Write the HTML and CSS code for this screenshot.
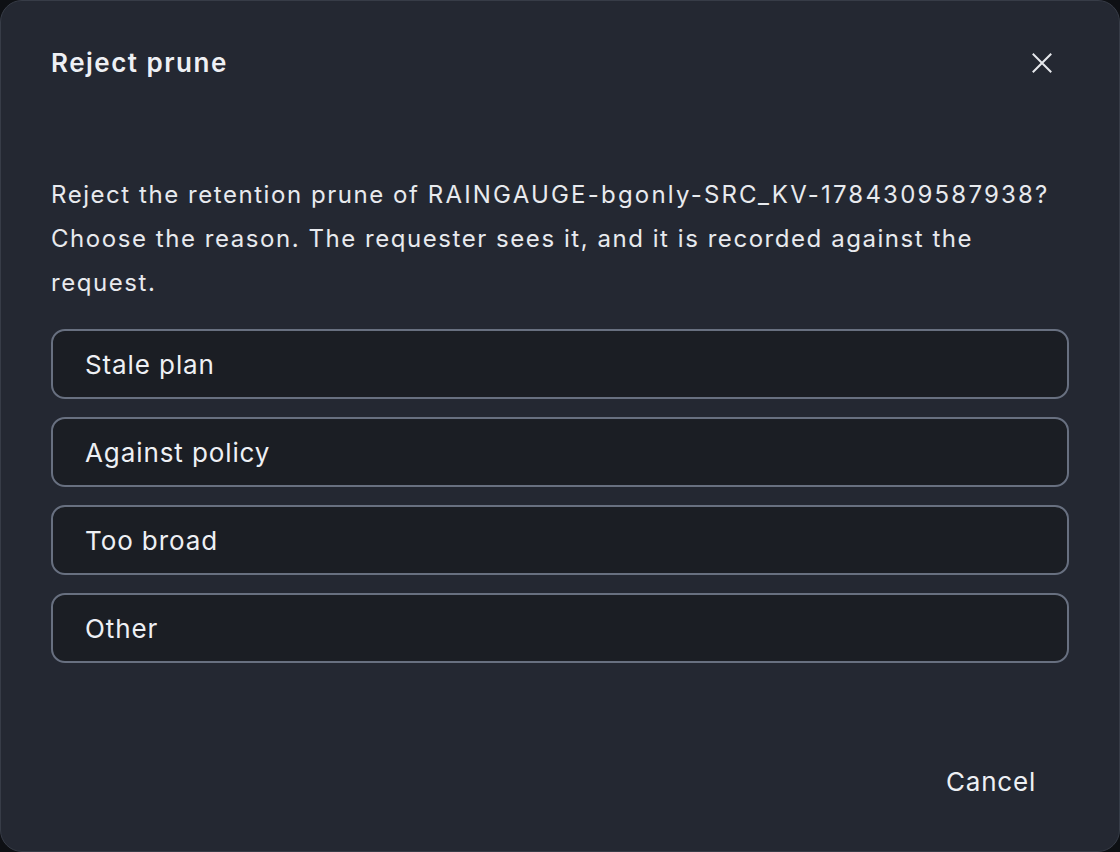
FILE: index.html
```html
<!DOCTYPE html>
<html lang="en">
<head>
<meta charset="utf-8">
<title>Reject prune</title>
<link rel="stylesheet" href="styles.css">
</head>
<body>
<div class="dialog" role="dialog" aria-labelledby="dlg-title">
  <div class="header">
    <h2 id="dlg-title" class="title">Reject prune</h2>
    <button class="close" aria-label="Close">
      <svg width="20" height="20" viewBox="0 0 20 20" fill="none" stroke="currentColor" stroke-width="2" stroke-linecap="square"><path d="M1.5 1.5L18.5 18.5M18.5 1.5L1.5 18.5"/></svg>
    </button>
  </div>
  <p class="body">Reject the retention prune of <span class="ident">RAINGAUGE-bgonly-SRC_KV-1784309587938</span>? Choose the reason. The requester sees it, and it is recorded against the request.</p>
  <div class="options">
    <button class="option">Stale plan</button>
    <button class="option">Against policy</button>
    <button class="option">Too broad</button>
    <button class="option">Other</button>
  </div>
  <div class="footer">
    <button class="cancel">Cancel</button>
  </div>
</div>
</body>
</html>
```
FILE: styles.css
```css
html, body {
  margin: 0;
  padding: 0;
  background: #0e1014;
}
body {
  font-family: Inter, "Noto Sans", sans-serif;
  color: #eef0f4;
}
.dialog {
  box-sizing: border-box;
  width: 1120px;
  height: 852px;
  background: #242832;
  border: 1px solid #373c47;
  border-radius: 22px;
  padding: 42px 50px 0 50px;
  display: flex;
  flex-direction: column;
}
.header {
  display: flex;
  align-items: center;
  justify-content: space-between;
  height: 40px;
}
.title {
  margin: 0;
  font-size: 26px;
  font-weight: 600;
  line-height: 40px;
  letter-spacing: 1.5px;
  color: #eef0f4;
}
.close {
  width: 40px;
  height: 40px;
  margin-right: 7px;
  padding: 0;
  background: none;
  border: none;
  color: #e6e8ec;
  display: flex;
  align-items: center;
  justify-content: center;
}
.body {
  margin: 90px 0 0 0;
  font-size: 24px;
  line-height: 44px;
  letter-spacing: 1.55px;
  color: #e8eaee;
}
.ident {
  letter-spacing: 2.2px;
}
.options {
  margin-top: 24px;
  display: flex;
  flex-direction: column;
  gap: 18px;
}
.option {
  box-sizing: border-box;
  height: 70px;
  width: 100%;
  text-align: left;
  padding: 0 32px;
  background: #1b1e24;
  border: 2px solid #687080;
  border-radius: 14px;
  font-family: Inter, "Noto Sans", sans-serif;
  font-size: 26px;
  letter-spacing: 0.9px;
  color: #eef0f4;
}
.footer {
  margin-top: auto;
  margin-bottom: 42px;
  display: flex;
  justify-content: flex-end;
}
.cancel {
  height: 56px;
  padding: 0 33px;
  margin-right: 0;
  background: none;
  border: none;
  border-radius: 12px;
  font-family: Inter, "Noto Sans", sans-serif;
  font-size: 26px;
  letter-spacing: 0.8px;
  color: #eef0f4;
}
```
